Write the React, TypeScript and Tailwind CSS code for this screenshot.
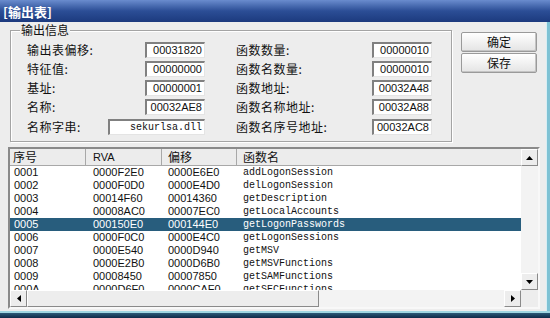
import React from 'react'

const rows = [
  { no: '0001', rva: '0000F2E0', off: '0000E6E0', name: 'addLogonSession' },
  { no: '0002', rva: '0000F0D0', off: '0000E4D0', name: 'delLogonSession' },
  { no: '0003', rva: '00014F60', off: '00014360', name: 'getDescription' },
  { no: '0004', rva: '00008AC0', off: '00007EC0', name: 'getLocalAccounts' },
  { no: '0005', rva: '000150E0', off: '000144E0', name: 'getLogonPasswords' },
  { no: '0006', rva: '0000F0C0', off: '0000E4C0', name: 'getLogonSessions' },
  { no: '0007', rva: '0000E540', off: '0000D940', name: 'getMSV' },
  { no: '0008', rva: '0000E2B0', off: '0000D6B0', name: 'getMSVFunctions' },
  { no: '0009', rva: '00008450', off: '00007850', name: 'getSAMFunctions' },
  { no: '000A', rva: '0000D6F0', off: '0000CAF0', name: 'getSECFunctions' },
]

const cjk = "font-['Noto_Sans_CJK_SC',sans-serif]"
const sans = "font-['Liberation_Sans','Noto_Sans_CJK_SC',sans-serif]"
const mono = "font-['Liberation_Mono',monospace]"

function Box({ value, wide, isMono }: { value: string; wide?: boolean; isMono?: boolean }) {
  return (
    <div
      className={`${wide ? 'w-[97px]' : 'w-[60px]'} h-[16px] bg-white border-t-2 border-l-2 border-t-[#808080] border-l-[#808080] border-b border-r border-b-[#e4e4e4] border-r-[#e4e4e4] flex items-center justify-end pr-[2px] text-[#111] ${
        isMono ? `${mono} text-[10px]` : `${sans} text-[11px]`
      }`}
    >
      {value}
    </div>
  )
}

function Arrow({ dir }: { dir: 'up' | 'down' | 'left' | 'right' }) {
  const pts = {
    up: '0,4 7,4 3.5,0',
    down: '0,0 7,0 3.5,4',
    left: '4,0 4,7 0,3.5',
    right: '0,0 0,7 4,3.5',
  }[dir]
  const vert = dir === 'up' || dir === 'down'
  return (
    <svg width={vert ? 7 : 4} height={vert ? 4 : 7} viewBox={vert ? '0 0 7 4' : '0 0 4 7'}>
      <polygon points={pts} fill="#000" />
    </svg>
  )
}

function ScrollBtn({ dir }: { dir: 'up' | 'down' | 'left' | 'right' }) {
  return (
    <div className="w-[17px] h-[17px] shrink-0 bg-[#ededed] border border-t-white border-l-white border-b-[#8a8a8a] border-r-[#8a8a8a] flex items-center justify-center">
      <Arrow dir={dir} />
    </div>
  )
}

export default function App() {
  return (
    <div className={`w-[550px] h-[318px] flex flex-col overflow-hidden ${cjk} text-[12px] text-[#111]`}>
      {/* title bar */}
      <div className="h-[22px] shrink-0 bg-gradient-to-b from-[#6a8cce] via-[#2c4e96] to-[#1c3a7e] flex items-center pl-[3px]">
        <span className="text-white font-bold text-[13px] leading-none">[输出表]</span>
      </div>

      {/* body */}
      <div className="flex-1 flex bg-[#ededed]">
        <div className="flex-1 flex flex-col pl-[8px]">
          <div className="flex items-start">
            {/* group box */}
            <div className="relative ml-[2px] mt-[8px] w-[442px] h-[112px] border border-[#a4a4a4] shadow-[1px_1px_0_#ffffff,inset_1px_1px_0_#ffffff]">
              <span className="absolute -top-[9px] left-[9px] px-[1px] bg-[#ededed] leading-[16px]">输出信息</span>
              <div className="flex flex-col pt-[9px] pl-[16px]">
                {[
                  ['输出表偏移:', '00031820', '函数数量:', '00000010'],
                  ['特征值:', '00000000', '函数名数量:', '00000010'],
                  ['基址:', '00000001', '函数地址:', '00032A48'],
                  ['名称:', '00032AE8', '函数名称地址:', '00032A88'],
                ].map((r, i) => (
                  <div key={i} className="flex items-center h-[19px]">
                    <div className="w-[178px] flex items-center">
                      <span className="flex-1 tracking-[0.5px]">{r[0]}</span>
                      <Box value={r[1]} />
                    </div>
                    <div className="ml-[31px] w-[196px] flex items-center">
                      <span className="flex-1 tracking-[0.5px]">{r[2]}</span>
                      <Box value={r[3]} />
                    </div>
                  </div>
                ))}
                <div className="flex items-center h-[19px] mt-[1px]">
                  <div className="w-[178px] flex items-center">
                    <span className="flex-1 tracking-[0.5px]">名称字串:</span>
                    <Box value="sekurlsa.dll" wide isMono />
                  </div>
                  <div className="ml-[31px] w-[196px] flex items-center">
                    <span className="flex-1 tracking-[0.5px]">函数名序号地址:</span>
                    <Box value="00032AC8" />
                  </div>
                </div>
              </div>
            </div>

            {/* buttons */}
            <div className="ml-[9px] mt-[10px] flex flex-col gap-[1px]">
              {['确定', '保存'].map((b) => (
                <div
                  key={b}
                  className="w-[76px] h-[20px] rounded-[2px] border border-[#9a9a9a] bg-gradient-to-b from-white to-[#e4e4e4] shadow-[inset_-1px_-1px_0_#c4c4c4] flex items-center justify-center leading-none"
                >
                  {b}
                </div>
              ))}
            </div>
          </div>

          {/* list view */}
          <div className="mt-[5px] w-[532px] h-[162px] border-2 border-t-[#8a8a8a] border-l-[#8a8a8a] border-b-[#f8f8f8] border-r-[#f8f8f8] bg-white flex flex-col">
            <div className="flex h-[141px]">
              <div className="flex-1 flex flex-col overflow-hidden">
                {/* header */}
                <div className="h-[17px] shrink-0 grid grid-cols-[76px_76px_75px_1fr] bg-[#ececec] border-b border-[#a8a8a8]">
                  <div className="pl-[3px] border-r border-[#a8a8a8] flex items-center leading-none">序号</div>
                  <div className={`pl-[7px] border-r border-[#a8a8a8] flex items-center leading-none ${sans} text-[11px]`}>RVA</div>
                  <div className="pl-[6px] border-r border-[#a8a8a8] flex items-center leading-none">偏移</div>
                  <div className="pl-[6px] flex items-center leading-none">函数名</div>
                </div>
                {rows.map((r) => {
                  const sel = r.no === '0005'
                  return (
                    <div
                      key={r.no}
                      className={`h-[13px] shrink-0 grid grid-cols-[76px_76px_75px_1fr] items-center leading-none ${
                        sel ? 'bg-[#285d7d] text-white' : 'text-[#111]'
                      }`}
                    >
                      <span className={`pl-[4px] ${sans} text-[11px]`}>{r.no}</span>
                      <span className={`pl-[7px] ${sans} text-[11px]`}>{r.rva}</span>
                      <span className={`pl-[6px] ${sans} text-[11px]`}>{r.off}</span>
                      <span className={`pl-[6px] ${mono} text-[10px]`}>{r.name}</span>
                    </div>
                  )
                })}
              </div>
              {/* vertical scrollbar */}
              <div className="w-[17px] flex flex-col bg-[#f3f3f3]">
                <ScrollBtn dir="up" />
                <div className="flex-1" />
                <ScrollBtn dir="down" />
              </div>
            </div>
            {/* horizontal scrollbar */}
            <div className="h-[17px] flex bg-[#f3f3f3]">
              <ScrollBtn dir="left" />
              <div className="flex-1 flex">
                <div className="w-[292px] h-[17px] bg-[#ededed] border border-t-white border-l-white border-b-[#8a8a8a] border-r-[#8a8a8a]" />
              </div>
              <ScrollBtn dir="right" />
              <div className="w-[17px] bg-[#ededed]" />
            </div>
          </div>
        </div>
        <div className="w-[4px] border-l border-[#d8eef4] bg-[#7fc2d4]" />
      </div>

      {/* bottom frame */}
      <div className="h-[7px] shrink-0 border-t-2 border-[#9fd6e2] bg-gradient-to-b from-[#2a5a78] to-[#0e2a48]" />
    </div>
  )
}
